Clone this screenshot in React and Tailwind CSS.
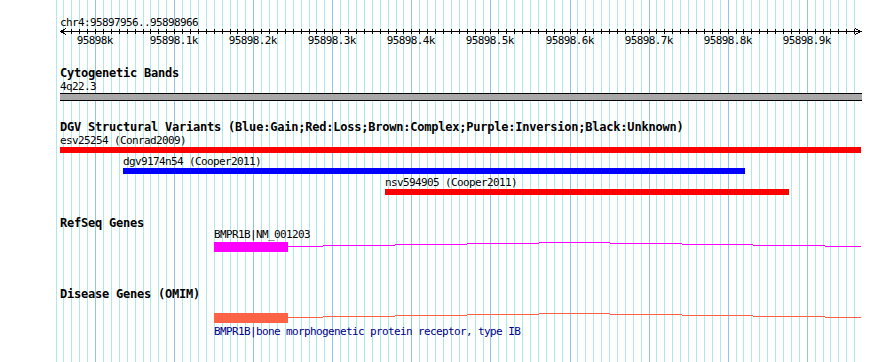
const X0 = 95.6; // x of 95898000
const S = 0.7907;
const col = (bp) => Math.floor(X0 + (bp - 95898000) * S);

const gridLines = [];
for (let bp = 95897950; bp <= 95898960; bp += 10) {
  gridLines.push({ x: col(bp), major: bp % 100 === 0 });
}

const majorLabels = [
  "95898k",
  "95898.1k",
  "95898.2k",
  "95898.3k",
  "95898.4k",
  "95898.5k",
  "95898.6k",
  "95898.7k",
  "95898.8k",
  "95898.9k",
].map((t, i) => ({ t, x: col(95898000 + i * 100) }));

const segs = [
  [288, 323, 246],
  [323, 395, 245],
  [395, 467, 244],
  [467, 539, 243],
  [539, 610, 242],
  [610, 682, 243],
  [682, 753, 244],
  [753, 825, 245],
  [825, 861, 246],
];

function GeneModel({ color, className }) {
  // local origin: page x=60, page y=241 (box top at local y=1)
  return (
    <svg width="802" height="12" className={className} shapeRendering="crispEdges">
      <rect x={154} y={1} width={74} height={10} fill={color} />
      {segs.map(([a, b, y], i) => (
        <rect key={i} x={a - 60} y={y - 241} width={b - a} height={1} fill={color} />
      ))}
    </svg>
  );
}

const txt = "text-[11px] leading-[11px] tracking-[-0.62px] whitespace-pre";
const ttl = "text-[12px] leading-[12px] tracking-[-0.22px] font-bold whitespace-pre";

export default function App() {
  return (
    <div className="relative w-[890px] h-[362px] overflow-hidden bg-white text-black font-['DejaVu_Sans_Mono',monospace]">
      {/* guide lines */}
      <svg
        className="absolute inset-0"
        width="890"
        height="362"
        shapeRendering="crispEdges"
      >
        {gridLines.map((l, i) => (
          <rect
            key={i}
            x={l.x}
            y={0}
            width={1}
            height={362}
            fill={l.major ? "#8cc6ea" : "#aeeaea"}
          />
        ))}
      </svg>

      <div className="relative flex flex-col items-start pl-[60px]">
        {/* Ruler */}
        <div className="flex flex-col h-[50px] pt-[17px]">
          <div className={txt}>chr4:95897956..95898966</div>
          <svg width="802" height="7" className="block" shapeRendering="crispEdges">
            <rect x={0} y={3} width={802} height={1} fill="#000" />
            {gridLines
              .filter((l) => l.x >= 62 && l.x <= 858)
              .map((l, i) => (
                <rect key={i} x={l.x - 60} y={1} width={1} height={5} fill="#000" />
              ))}
            <polyline points="6,0.5 0.5,3.5 6,6.5" fill="none" stroke="#000" strokeWidth="1" />
            <polyline points="795,0.5 800.5,3.5 795,6.5" fill="none" stroke="#000" strokeWidth="1" />
          </svg>
          <div className="relative h-[11px] w-[802px]">
            {majorLabels.map((m) => (
              <span
                key={m.t}
                className={`absolute top-0 -translate-x-1/2 ${txt}`}
                style={{ left: m.x - 60 - 0.3 }}
              >
                {m.t}
              </span>
            ))}
          </div>
        </div>

        {/* Cytogenetic Bands */}
        <div className={`mt-[17px] ${ttl}`}>Cytogenetic Bands</div>
        <div className={`mt-[2px] ${txt}`}>4q22.3</div>
        <div className="mt-[1px] h-[8px] w-[802px] border-y border-black bg-[#a8a8a8]" />

        {/* DGV */}
        <div className={`mt-[20px] ${ttl}`}>
          DGV Structural Variants (Blue:Gain;Red:Loss;Brown:Complex;Purple:Inversion;Black:Unknown)
        </div>
        <div className={`mt-[2px] ${txt}`}>esv25254 (Conrad2009)</div>
        <div className="mt-[1px] h-[6px] w-[801px] bg-[#ff0000]" />
        <div className={`mt-[3px] ml-[63px] ${txt}`}>dgv9174n54 (Cooper2011)</div>
        <div className="mt-[1px] ml-[63px] h-[6px] w-[622px] bg-[#0000ff]" />
        <div className={`mt-[3px] ml-[325px] ${txt}`}>nsv594905 (Cooper2011)</div>
        <div className="mt-[1px] ml-[325px] h-[6px] w-[404px] bg-[#ff0000]" />

        {/* RefSeq */}
        <div className={`mt-[22px] ${ttl}`}>RefSeq Genes</div>
        <div className={`ml-[154px] ${txt}`}>BMPR1B|NM_001203</div>
        <GeneModel color="#ff00ff" className="block mt-[1px]" />

        {/* OMIM */}
        <div className={`mt-[35px] ${ttl}`}>Disease Genes (OMIM)</div>
        <GeneModel color="#ff6347" className="block mt-[12px]" />
        <div className={`mt-[2px] ml-[154px] text-[#00008b] ${txt}`}>
          BMPR1B|bone morphogenetic protein receptor, type IB
        </div>
      </div>
    </div>
  );
}
